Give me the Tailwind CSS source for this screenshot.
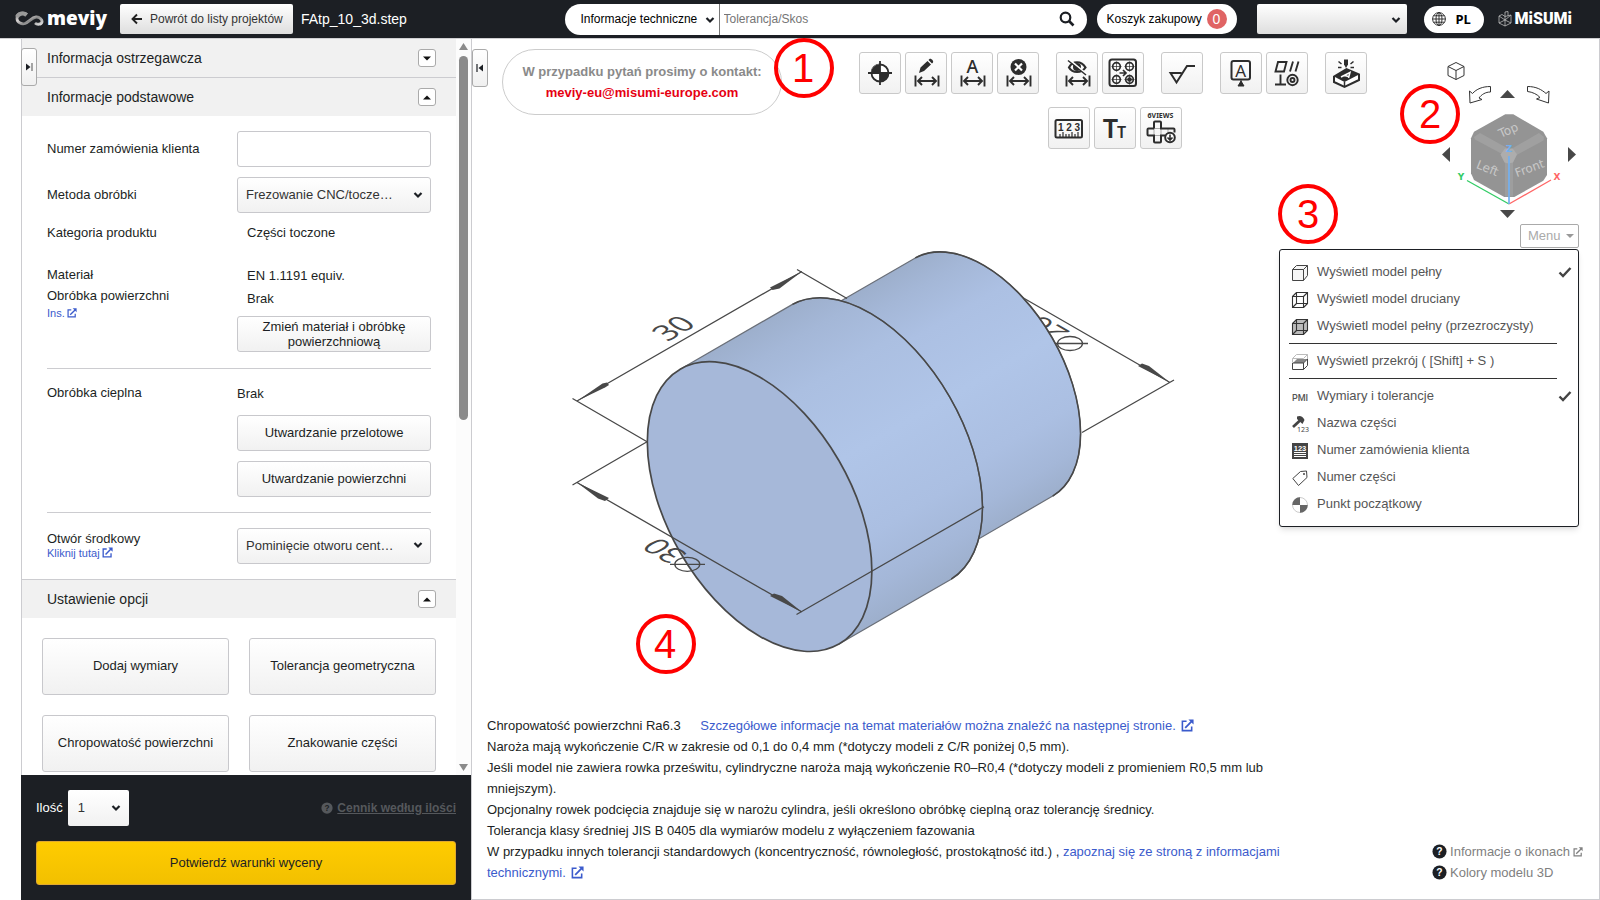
<!DOCTYPE html>
<html lang="pl">
<head>
    <meta charset="UTF-8">
    <meta name="viewport" content="width=device-width, initial-scale=1.0">
    <title>meviy - FAtp_10_3d.step</title>
    <script src="https://cdn.jsdelivr.net/npm/@tailwindcss/browser@4"></script>
</head>
<body class="flex flex-col h-screen overflow-hidden bg-white font-['Liberation_Sans',Arial,sans-serif] text-[13px] leading-5 text-[#1c1f24]">

    <!-- Shared icons -->
    <svg class="hidden" aria-hidden="true">
        <symbol id="chevron" viewBox="0 0 10 8">
            <path d="M1.500 2l3.500 3.500L8.500 2" fill="none" stroke="#1c1f24" stroke-width="2.200"/>
        </symbol>
        <symbol id="external" viewBox="0 0 14 14">
            <path d="M6 2.500H1.500v10h10V8" fill="none" stroke="currentColor" stroke-width="1.700"/>
            <path d="M4.500 9.500L12 2" stroke="currentColor" stroke-width="1.900"/>
            <path d="M8 .5h5.500V6z" fill="currentColor"/>
        </symbol>
        <symbol id="check" viewBox="0 0 14 12">
            <path d="M1.500 6.500L5 10l7.500-8" fill="none" stroke="#444" stroke-width="2.400"/>
        </symbol>
        <symbol id="question" viewBox="0 0 16 16">
            <circle cx="8" cy="8" r="7.500" fill="currentColor"/>
            <text x="8" y="12" text-anchor="middle" font-size="11" font-weight="bold" font-family="Liberation Sans">?</text>
        </symbol>
        <symbol id="dim" viewBox="0 0 40 40">
            <path d="M9.500 22.500v11M32.500 22.500v11M12 28h18M16 24l-4 4 4 4M26 24l4 4-4 4" fill="none" stroke="#2d2d2d" stroke-width="1.900"/>
        </symbol>
    </svg>

    <!-- Top bar -->
    <header class="flex items-center h-[38px] shrink-0 bg-[#1c1f24] pl-[15px] pr-7">
        <a href="#" class="flex items-center w-[105px] text-white" aria-label="meviy">
            <svg class="w-[29px] h-4" viewBox="0 0 29 16">
                <defs>
                    <linearGradient id="silver" x1="0" y1="0" x2="1" y2="1">
                        <stop offset="0" stop-color="#777"/>
                        <stop offset=".35" stop-color="#d8d4d4"/>
                        <stop offset=".6" stop-color="#8b8b8b"/>
                        <stop offset="1" stop-color="#ddd"/>
                    </linearGradient>
                </defs>
                <path d="M12 3.500C9 .8 2.500 1.500 2 7c-.3 4.500 4.500 6.500 8 5.500 4-1.200 6.500-6 11-6.500 4-.3 6.500 3 6 5-.8 2.800-5 2.800-7 1" fill="none" stroke="url(#silver)" stroke-width="2.800"/>
                <path d="M2 6c1.500-3.500 6-4.500 9.500-2" fill="none" stroke="#999" stroke-width="4"/>
            </svg>
            <span class="ml-[3px] mb-[2px] font-['Open_Sans'] text-[19px] font-extrabold">meviy</span>
        </a>
        <button class="flex items-center w-[173px] h-[30px] pl-[11px] rounded-[2px] bg-linear-to-b from-white to-[#dedede] text-xs text-[#333] whitespace-nowrap">
            <svg class="w-[11px] h-3 mr-2" viewBox="0 0 11 12"><path d="M11 6H2M6 1.500L1.500 6 6 10.500" fill="none" stroke="#222" stroke-width="1.900"/></svg>
            Powrót do listy projektów
        </button>
        <span class="ml-2 text-sm text-white">FAtp_10_3d.step</span>

        <form class="flex items-center w-[522px] h-[31px] ml-auto rounded-full bg-white overflow-hidden text-xs">
            <div class="relative h-full w-[155px] border-r border-[#777]">
                <select aria-label="Zakres" class="appearance-none w-full h-full pl-4 text-black">
                    <option>Informacje techniczne</option>
                </select>
                <svg class="absolute right-1 top-3 w-[10px] h-2 pointer-events-none"><use href="#chevron"/></svg>
            </div>
            <input type="search" aria-label="Szukaj" placeholder="Tolerancja/Skos" class="flex-1 h-full pl-1 placeholder:text-[#757575]">
            <button type="button" aria-label="Szukaj" class="w-7">
                <svg class="w-4 h-4" viewBox="0 0 16 16"><circle cx="6.500" cy="6.500" r="4.800" fill="none" stroke="#1c1f24" stroke-width="2.200"/><path d="M10 10l4.500 4.500" stroke="#1c1f24" stroke-width="2.600"/></svg>
            </button>
        </form>
        <a href="#" class="flex items-center justify-between w-[140px] h-[30px] ml-[10px] px-[10px] rounded-full bg-white text-xs text-black whitespace-nowrap">
            Koszyk zakupowy
            <span class="w-5 h-5 rounded-full bg-[#e06464] text-white text-center text-sm leading-5">0</span>
        </a>
        <div class="relative w-[150px] h-[30px] ml-5">
            <select aria-label="Konto" class="appearance-none w-full h-full rounded-[2px] bg-linear-to-b from-white to-[#dedede]">
                <option></option>
            </select>
            <svg class="absolute right-[6px] top-3 w-[10px] h-2 pointer-events-none"><use href="#chevron"/></svg>
        </div>
        <button class="flex items-center w-[60px] h-[27px] ml-[17px] pl-2 rounded-full bg-white text-black font-bold">
            <svg class="w-[14px] h-[14px] mr-[10px]" viewBox="0 0 14 14" fill="none" stroke="#222" stroke-width=".9">
                <circle cx="7" cy="7" r="6.400"/><ellipse cx="7" cy="7" rx="3" ry="6.400"/><path d="M7 .5v13M.5 7h13M1.500 3.800h11M1.500 10.200h11"/>
            </svg>
            <span class="font-['Noto_Sans']">PL</span>
        </button>
        <a href="#" class="flex items-center ml-[14px] text-white" aria-label="MiSUMi">
            <svg class="w-[14px] h-4 mr-[3px]" viewBox="0 0 14 16" fill="none" stroke="#bbb" stroke-width=".8">
                <path d="M1 5l3-1.500 3 2v9.500l-6-3zM7 5.500L13 4v8l-6 3M7 5.500V1l3-.5v4.300M1 5l6 4 6-5M1 12l6-3M7 9l6 3"/>
            </svg>
            <span class="font-['Roboto'] text-base font-black">MiSUMi</span>
        </a>
    </header>

    <div class="flex flex-1 min-h-0 pl-[21px] border-t border-[#cfcfd2]">

        <!-- Left settings panel -->
        <aside class="relative flex flex-col w-[450px] shrink-0">
            <button aria-label="Zwiń panel" class="absolute left-0 top-[9px] z-10 flex items-center justify-center w-4 h-[38px] border border-[#aaa] rounded-[3px] bg-linear-to-b from-white to-[#f0f0f0]">
                <svg class="w-2 h-[10px]" viewBox="0 0 8 10"><path d="M1 1.500v7L5.500 5z" fill="#1c1f24"/><path d="M7 1v8" stroke="#777" stroke-width="1.300"/></svg>
            </button>

            <div class="flex flex-1 min-h-0 border-l border-[#ccccd0]">
                <div class="flex-1 overflow-hidden">
                    <div class="flex items-center justify-between h-[38px] pl-[25px] pr-5 bg-[#f1f1f1] text-sm">
                        <h2>Informacja ostrzegawcza</h2>
                        <button aria-label="Rozwiń" class="flex items-center justify-center w-[18px] h-[18px] border border-[#aaa] rounded-[3px] bg-white"><svg class="w-2 h-[5px]" viewBox="0 0 8 5"><path d="M0 .5h8L4 4.500z" fill="#111"/></svg></button>
                    </div>
                    <div class="flex items-center justify-between h-[39px] pl-[25px] pr-5 border-t border-[#ccccd0] bg-[#f1f1f1] text-sm">
                        <h2>Informacje podstawowe</h2>
                        <button aria-label="Zwiń" class="flex items-center justify-center w-[18px] h-[18px] border border-[#aaa] rounded-[3px] bg-white"><svg class="w-2 h-[5px]" viewBox="0 0 8 5"><path d="M0 4.500h8L4 .5z" fill="#111"/></svg></button>
                    </div>

                    <div class="px-[25px] py-[15px]">
                        <div class="flex items-center justify-between">
                            <label for="order">Numer zamówienia klienta</label>
                            <input id="order" type="text" class="w-[194px] h-9 px-2 border border-[#c8c8cc] rounded-[3px]">
                        </div>
                        <div class="flex items-center justify-between mt-[10px]">
                            <label for="method">Metoda obróbki</label>
                            <div class="relative w-[194px]">
                                <select id="method" class="appearance-none w-full h-9 pl-2 border border-[#c8c8cc] rounded-[3px] bg-linear-to-b from-white to-[#f1f1f1] text-[#333]">
                                    <option>Frezowanie CNC/tocze…</option>
                                </select>
                                <svg class="absolute right-2 top-[14px] w-[10px] h-2 pointer-events-none"><use href="#chevron"/></svg>
                            </div>
                        </div>
                        <div class="flex justify-between mt-[10px]">
                            <span>Kategoria produktu</span>
                            <span class="w-[184px]">Części toczone</span>
                        </div>
                        <div class="flex justify-between mt-[21px] pb-[15px] border-b border-[#ccccd0]">
                            <div class="leading-[21px]">
                                <p>Materiał</p>
                                <p>Obróbka powierzchni</p>
                                <a href="#" class="flex items-center gap-[2px] text-[11px] leading-[14px] text-[#3b5bcc]">Ins. <svg class="w-[10px] h-[10px]"><use href="#external"/></svg></a>
                            </div>
                            <div class="w-[194px] leading-[23px]">
                                <p class="pl-[10px]">EN 1.1191 equiv.</p>
                                <p class="pl-[10px]">Brak</p>
                                <button class="w-full h-9 mt-[6px] px-5 border border-[#c8c8cc] rounded-[3px] bg-linear-to-b from-white to-[#f1f1f1] leading-[15px]">Zmień materiał i obróbkę powierzchniową</button>
                            </div>
                        </div>
                        <div class="flex justify-between mt-[14px] pb-[15px] border-b border-[#ccccd0]">
                            <p>Obróbka cieplna</p>
                            <div class="w-[194px]">
                                <p class="leading-[22px]">Brak</p>
                                <button class="w-full h-9 mt-[10px] border border-[#c8c8cc] rounded-[3px] bg-linear-to-b from-white to-[#f1f1f1]">Utwardzanie przelotowe</button>
                                <button class="w-full h-9 mt-[10px] border border-[#c8c8cc] rounded-[3px] bg-linear-to-b from-white to-[#f1f1f1]">Utwardzanie powierzchni</button>
                            </div>
                        </div>
                        <div class="flex items-center justify-between mt-[15px]">
                            <div class="pb-[2px] leading-[15px]">
                                <label for="hole">Otwór środkowy</label>
                                <a href="#" class="flex items-center gap-[2px] text-[11px] leading-[14px] text-[#3b5bcc]">Kliknij tutaj <svg class="w-[11px] h-[11px]"><use href="#external"/></svg></a>
                            </div>
                            <div class="relative w-[194px]">
                                <select id="hole" class="appearance-none w-full h-9 pl-2 border border-[#c8c8cc] rounded-[3px] bg-linear-to-b from-white to-[#f1f1f1] text-[#333]">
                                    <option>Pominięcie otworu cent…</option>
                                </select>
                                <svg class="absolute right-2 top-[13px] w-[10px] h-2 pointer-events-none"><use href="#chevron"/></svg>
                            </div>
                        </div>
                    </div>

                    <div class="flex items-center justify-between h-[39px] pl-[25px] pr-5 border-t border-[#ccccd0] bg-[#f1f1f1] text-sm">
                        <h2>Ustawienie opcji</h2>
                        <button aria-label="Zwiń" class="flex items-center justify-center w-[18px] h-[18px] border border-[#aaa] rounded-[3px] bg-white"><svg class="w-2 h-[5px]" viewBox="0 0 8 5"><path d="M0 4.500h8L4 .5z" fill="#111"/></svg></button>
                    </div>
                    <div class="grid grid-cols-2 gap-5 p-5">
                        <button class="h-[57px] pb-[2px] border border-[#c8c8cc] rounded-[3px] bg-linear-to-b from-white to-[#f1f1f1]">Dodaj wymiary</button>
                        <button class="h-[57px] pb-[2px] border border-[#c8c8cc] rounded-[3px] bg-linear-to-b from-white to-[#f1f1f1]">Tolerancja geometryczna</button>
                        <button class="h-[57px] pb-[2px] border border-[#c8c8cc] rounded-[3px] bg-linear-to-b from-white to-[#f1f1f1]">Chropowatość powierzchni</button>
                        <button class="h-[57px] pb-[2px] border border-[#c8c8cc] rounded-[3px] bg-linear-to-b from-white to-[#f1f1f1]">Znakowanie części</button>
                    </div>
                </div>

                <!-- Scrollbar -->
                <div class="flex flex-col items-center w-[15px] py-1 bg-[#fcfcfc]">
                    <svg class="w-[9px] h-[7px]" viewBox="0 0 9 7"><path d="M4.500 0L9 7H0z" fill="#8b8b8b"/></svg>
                    <div class="w-[9px] h-1/2 mt-[6px] rounded-full bg-[#8b8b8b]"></div>
                    <svg class="w-[9px] h-[7px] mt-auto" viewBox="0 0 9 7"><path d="M4.500 7L9 0H0z" fill="#8b8b8b"/></svg>
                </div>
            </div>

            <div class="shrink-0 h-[125px] px-[15px] pt-[15px] bg-[#1c1f24]">
                <div class="flex items-center">
                    <label for="qty" class="text-white mr-[5px]">Ilość</label>
                    <div class="relative w-[61px]">
                        <select id="qty" class="appearance-none w-full h-9 pl-[10px] rounded-[2px] bg-linear-to-b from-white to-[#f1f1f1] text-[#333]">
                            <option>1</option>
                        </select>
                        <svg class="absolute right-2 top-[14px] w-[10px] h-2 pointer-events-none"><use href="#chevron"/></svg>
                    </div>
                    <a href="#" class="flex items-center gap-1 ml-auto text-xs text-[#55585c] font-bold">
                        <svg class="w-3 h-3 fill-[#1c1f24]"><use href="#question"/></svg>
                        <span class="underline">Cennik według ilości</span>
                    </a>
                </div>
                <button class="w-full h-11 mt-[15px] border border-[#e0a830] rounded-[3px] bg-linear-to-b from-[#ffcc00] to-[#f2c000]">Potwierdź warunki wyceny</button>
            </div>
        </aside>

        <!-- 3D viewer -->
        <main class="relative flex flex-col justify-between flex-1 border-x border-b border-[#ccccd0]">
            <svg class="absolute inset-0 w-full h-full" viewBox="472 39 1127 860" stroke-linejoin="round">
                <defs>
                    <linearGradient id="big" gradientUnits="userSpaceOnUse" x1="680" y1="369" x2="839" y2="644">
                        <stop offset="0" stop-color="#9dafcc"/>
                        <stop offset=".1" stop-color="#a4b7d7"/>
                        <stop offset=".25" stop-color="#abbfe1"/>
                        <stop offset=".5" stop-color="#b0c5e8"/>
                        <stop offset=".75" stop-color="#abbfe2"/>
                        <stop offset=".9" stop-color="#a4b7d8"/>
                        <stop offset="1" stop-color="#9dafcc"/>
                    </linearGradient>
                    <linearGradient id="small" gradientUnits="userSpaceOnUse" x1="803" y1="323" x2="941" y2="561">
                        <stop offset="0" stop-color="#9dafcc"/>
                        <stop offset=".1" stop-color="#a4b7d7"/>
                        <stop offset=".25" stop-color="#acc0e3"/>
                        <stop offset=".5" stop-color="#b0c5e8"/>
                        <stop offset=".75" stop-color="#abbfe2"/>
                        <stop offset=".9" stop-color="#a4b7d8"/>
                        <stop offset="1" stop-color="#9dafcc"/>
                    </linearGradient>
                </defs>
                <!-- rear diameter dimension, partly behind the part -->
                <g stroke="#484848" stroke-width="1.300" fill="none">
                    <path d="M1020 296L1170 382.500M1082 432.500L1174 380"/>
                    <ellipse cx="1070" cy="343.500" rx="12.500" ry="7"/>
                    <path d="M1052 343.500h36"/>
                    <path d="M1170 382.500l-32-16.500 4-2.500 7 2.500z" fill="#484848" stroke="none"/>
                </g>
                <text transform="matrix(-.866 -.5 .866 -.5 1047 329)" y="11" text-anchor="middle" font-family="Open Sans" font-size="30" fill="#484848">26</text>
                <!-- small cylinder -->
                <path d="M803.100 322.700L915.300 257.900A137.500 79.400 60 0 1 1052.700 496.100L940.500 560.900z" fill="url(#small)" stroke="#6a6f78" stroke-width="1.200"/>
                <path d="M915.300 257.900A137.500 79.400 60 0 1 1052.700 496.100" fill="none" stroke="#484848" stroke-width="1.600"/>
                <!-- large cylinder -->
                <path d="M680.200 369.200L792.500 304.400A158.700 91.700 60 0 1 951.200 579.200L839 644z" fill="url(#big)" stroke="#6a6f78" stroke-width="1.300"/>
                <path d="M792.500 304.400A158.700 91.700 60 0 1 951.200 579.200" fill="none" stroke="#484848" stroke-width="1.500"/>
                <ellipse cx="759.600" cy="506.600" rx="158.700" ry="91.700" transform="rotate(60 759.600 506.600)" fill="#a6b8d9" stroke="#484848" stroke-width="1.700"/>
                <!-- front dimensions -->
                <g stroke="#484848" stroke-width="1.300" fill="none">
                    <path d="M577 401L802 271.500M572.500 398.500L647.500 442M797 269.500L847 298.500"/>
                    <path d="M577 482.500L802 612M572.500 485L647.500 441.500M796.500 614.500L984 506.700"/>
                    <g fill="#484848" stroke="none">
                        <path d="M577 401l25.500-17.500 4.500-1 2 2.500-4 2.500z"/>
                        <path d="M802 271.500l-32 16 2.500 2.500 7-1.500z"/>
                        <path d="M577 482.500l32 15.500-4 3-7-2.500z"/>
                        <path d="M802 612l-32-16 4-2.500 8 2.500z"/>
                    </g>
                    <ellipse cx="687.300" cy="564.300" rx="12.500" ry="7"/>
                    <path d="M670 564.300h35"/>
                </g>
                <g font-family="Open Sans" font-size="30" fill="#484848" text-anchor="middle">
                    <text transform="matrix(.866 -.5 .866 .5 673 328)" y="11">30</text>
                    <text transform="matrix(-.866 -.5 .866 -.5 664 551)" y="11">30</text>
                </g>
                <!-- numbered callouts -->
                <g fill="none" stroke="#f00" stroke-width="4">
                    <circle cx="1430" cy="114" r="28"/>
                    <circle cx="1308" cy="214" r="28"/>
                    <circle cx="666" cy="644" r="28"/>
                </g>
                <g fill="#f00" font-size="40" text-anchor="middle">
                    <text x="1430" y="128">2</text>
                    <text x="1308" y="228">3</text>
                    <text x="665" y="658">4</text>
                </g>
            </svg>

            <div class="relative flex items-start pt-[10px]">
                <button aria-label="Pokaż panel" class="flex items-center justify-center w-4 h-[38px] border border-[#aaa] rounded-[3px] bg-linear-to-b from-white to-[#f0f0f0]">
                    <svg class="w-2 h-[10px]" viewBox="0 0 8 10"><path d="M7 1.500v7L2.500 5z" fill="#1c1f24"/><path d="M1 1v8" stroke="#1c1f24" stroke-width="1.200"/></svg>
                </button>
                <div class="relative w-[280px] h-[66px] ml-[14px] pt-[11px] border border-[#ccc] rounded-[33px] text-center font-bold leading-[21px]">
                    <p class="text-[#8a8a8a]">W przypadku pytań prosimy o kontakt:</p>
                    <a href="#" class="text-[#e60012]">meviy-eu@misumi-europe.com</a>
                    <svg class="absolute -right-[53px] -top-3 w-[60px] h-[60px]" viewBox="0 0 60 60">
                        <circle cx="30" cy="30" r="28" fill="none" stroke="#f00" stroke-width="4"/>
                        <text x="29" y="44" text-anchor="middle" font-size="40" font-weight="normal" fill="#f00">1</text>
                    </svg>
                </div>

                <!-- Toolbar -->
                <div class="flex flex-col items-center gap-[13px] w-[508px] ml-[77px] mt-[3px] [&_button]:w-[42px] [&_button]:h-[42px] [&_button]:border [&_button]:border-[#c9c9c9] [&_button]:rounded-[3px] [&_button]:bg-linear-to-b [&_button]:from-white [&_button]:to-[#f1f1f1] [&_svg]:w-10 [&_svg]:h-10">
                    <div class="flex gap-[17px]">
                        <div class="flex gap-1">
                            <button aria-label="Punkt początkowy"><svg viewBox="0 0 40 40"><circle cx="20" cy="20" r="8.500" fill="#fff" stroke="#2d2d2d" stroke-width="1.800"/><path d="M20 20v-9a9 9 0 0 1 0 0 9 9 0 0 0-9 9z" fill="#fff"/><path d="M20 20v-9a9 9 0 0 0-9 9zM20 20v9a9 9 0 0 0 9-9z" fill="#2d2d2d"/><path d="M20 8v24M8 20h24" stroke="#2d2d2d" stroke-width="1.800"/></svg></button>
                            <button aria-label="Edytuj wymiar"><svg viewBox="0 0 40 40"><use href="#dim"/><path d="M13 20l1.500-5.500 7-6.500 3.500 3.500-7 6.500zM22.500 7l1-1c1.500-1 4.500 2 3.500 3.500l-1 1z" fill="#2d2d2d"/></svg></button>
                            <button aria-label="Tekst wymiaru"><svg viewBox="0 0 40 40"><use href="#dim"/><text x="20.500" y="19.500" text-anchor="middle" font-size="18" font-family="Noto Sans" font-weight="500" fill="#2d2d2d">A</text></svg></button>
                            <button aria-label="Usuń wymiar"><svg viewBox="0 0 40 40"><use href="#dim"/><circle cx="20.500" cy="14" r="8" fill="#2d2d2d"/><path d="M17 10.500l7 7M24 10.500l-7 7" stroke="#fff" stroke-width="2.200"/></svg></button>
                        </div>
                        <div class="flex gap-1">
                            <button aria-label="Ukryj wymiary"><svg viewBox="0 0 40 40"><use href="#dim"/><path d="M12 14.500C15.500 7.500 24.500 7.500 28.500 14.500 24.500 20.500 15.500 20.500 12 14.500z" fill="none" stroke="#2d2d2d" stroke-width="2.200"/><circle cx="20" cy="14" r="4" fill="#2d2d2d"/><path d="M12.500 7l17 14" stroke="#fff" stroke-width="1.800"/><path d="M11 7.500l18 14.500" stroke="#2d2d2d" stroke-width="1.500"/></svg></button>
                            <button aria-label="Kopiuj otwory"><svg viewBox="0 0 40 40" fill="none" stroke="#2d2d2d" stroke-width="1.700"><rect x="6.500" y="6.500" width="26.500" height="26.500" rx="2.500" stroke-width="2"/><circle cx="13.500" cy="13.500" r="3.800"/><circle cx="26.500" cy="13.500" r="3.800"/><circle cx="13.500" cy="26.500" r="3.800"/><circle cx="26.500" cy="26.500" r="3.800"/><circle cx="26.500" cy="26.500" r="1.500" fill="#2d2d2d"/><path d="M13.500 8.500v10M8.500 13.500h10M26.500 8.500v10M21.500 13.500h10M13.500 21.500v10M8.500 26.500h10M26.500 21.500v10M21.500 26.500h10" stroke-width=".7"/><path d="M16.500 20h6M20 17l3 3-3 3"/></svg></button>
                        </div>
                        <button aria-label="Chropowatość"><svg viewBox="0 0 40 40"><path d="M19.500 20H8.500l6 9.500L25 13h8" fill="none" stroke="#2d2d2d" stroke-width="2"/></svg></button>
                        <div class="flex gap-1">
                            <button aria-label="Baza"><svg viewBox="0 0 40 40"><rect x="10.500" y="8" width="18.500" height="18.500" rx="2" fill="none" stroke="#2d2d2d" stroke-width="2"/><text x="19.700" y="23.500" text-anchor="middle" font-size="17" font-family="Noto Sans" fill="#2d2d2d">A</text><path d="M20 26.500v4M20 28l3 5h-6z" fill="#2d2d2d" stroke="#2d2d2d"/></svg></button>
                            <button aria-label="Tolerancja geometryczna"><svg viewBox="0 0 40 40" fill="none" stroke="#2d2d2d" stroke-width="1.900"><path d="M11 9h8.500l-2.500 9.500H8.500zM26 8.500l-3 10M31.500 8.500l-3 10M13.500 21.500v10M8 31.500h11"/><circle cx="25.500" cy="27" r="5.200"/><circle cx="25.500" cy="27" r="2"/></svg></button>
                        </div>
                        <button aria-label="Znakowanie"><svg viewBox="0 0 40 40"><path d="M8 23.500L20.500 16 33 21.500v5.500L18.500 34 8 29z" fill="#fff" stroke="#2d2d2d" stroke-width="2"/><path d="M8 23.500L20.500 16 33 21.500 18.500 29z" fill="#2d2d2d"/><path d="M18.500 29v5" stroke="#2d2d2d" stroke-width="1.500"/><path d="M15 24l9-4.500-1.500 5.500M18.500 22.500l4 1" fill="none" stroke="#fff" stroke-width="1.500"/><path d="M18 6.500h4v5l-2 3.500-2-3.500z" fill="#2d2d2d"/><path d="M12.500 8.500l3 2.500M12 14.500h3.500M27.500 8.500l-3 2.500M28 14.500h-3.500" stroke="#2d2d2d" stroke-width="1.500"/></svg></button>
                    </div>
                    <div class="flex gap-1 pl-1">
                        <button aria-label="Pomiar"><svg viewBox="0 0 40 40"><rect x="6.500" y="12" width="26.500" height="17.500" rx="1.500" fill="none" stroke="#2d2d2d" stroke-width="2"/><text x="20" y="22.500" text-anchor="middle" font-size="10" font-weight="bold" fill="#2d2d2d">1 2 3</text><path d="M11 29v-3M14 29v-5M17 29v-3M20 29v-3M23 29v-5M26 29v-3M29 29v-5" stroke="#2d2d2d" stroke-width="1.200"/></svg></button>
                        <button aria-label="Rozmiar tekstu"><svg viewBox="0 0 40 40" font-family="Noto Sans" font-weight="600" fill="#2d2d2d" text-anchor="middle"><text x="15.500" y="30" font-size="27">T</text><text x="26.500" y="30" font-size="16">T</text></svg></button>
                        <button aria-label="6 widoków"><svg viewBox="0 0 40 40"><text x="19.500" y="9.500" text-anchor="middle" font-size="7" font-weight="bold" font-family="Noto Sans" fill="#2d2d2d">6VIEWS</text><path d="M13 20.500h7M13 27.500h7M13 20.500v7M20 20.500v7M27 20.500v4" stroke="#aaa"/><path d="M13 20.500v-6q0-1 1-1h5q1 0 1 1v6h12.500q1 0 1 1v3M13 20.500H7.500q-1 0-1 1v5q0 1 1 1H13v6q0 1 1 1h5q1 0 1-1v-6h4" fill="none" stroke="#2d2d2d" stroke-width="2"/><circle cx="29" cy="29.500" r="4.800" fill="#fff" stroke="#2d2d2d" stroke-width="2"/><path d="M29 26.500v5M26.500 29.500l2.500 2.500 2.500-2.500" fill="none" stroke="#2d2d2d" stroke-width="1.600"/></svg></button>
                    </div>
                </div>

                <!-- View cube and display menu -->
                <div class="absolute right-5 top-5 flex flex-col items-end">
                    <svg class="w-[140px] h-[163px]" viewBox="1439 59 140 163" role="img" aria-label="Kostka widoku">
                        <path d="M1456 62.500l8 4v9l-8 4-8-4v-9zM1448 66.500l8 4 8-4M1456 70.500v9" fill="none" stroke="#333"/>
                        <g fill="#fff" stroke="#333">
                            <path d="M1490.500 86.500v5.500c-5 0-9 2.500-11.500 6l3 1.500-12 3.500-.5-12 3 2.500c4-4.500 10-7 18-7z"/>
                            <path d="M1527.500 86.500v5c5 .5 10 3 12.500 6l-3.500 1.500 12 4 .5-12-3 2.500c-4.500-4-10-7-18.500-7z"/>
                        </g>
                        <g fill="#484848">
                            <path d="M1507.500 90l7.500 8h-15z"/>
                            <path d="M1507.500 218l7.500-8h-15z"/>
                            <path d="M1442 154.500l8-7.500v15z"/>
                            <path d="M1576 154.500l-8-7.500v15z"/>
                        </g>
                        <path d="M1505.300 114.300h8l30 17.400 3.700 6.600v36.700l-3.700 5.700-29 16.300h-10l-30.300-17-3-6.700v-35l3-6.600z" fill="#949494"/>
                        <path d="M1474 137l6-4 27 15-3 7-29-15.500zM1544 137l-5-4-26 15 3.500 7 27-14.500z" fill="#a0a0a0"/>
                        <path d="M1505 161h8v35.500h-8z" fill="#9e9e9e"/>
                        <path d="M1505 148.500h8l4 6-4 8-4.500 1-4-1-4-8z" fill="#adadad"/>
                        <g font-family="DejaVu Sans" font-size="12" fill="#c8c8c8" text-anchor="middle">
                            <text transform="translate(1510 134) rotate(-24)">Top</text>
                            <text transform="translate(1486 172) rotate(22)">Left</text>
                            <text transform="translate(1531 172) rotate(-20)">Front</text>
                        </g>
                        <path d="M1509 204l-42-23.500" stroke="#3c6" stroke-width="1.300"/>
                        <path d="M1509 204l42-24" stroke="#f66" stroke-width="1.300"/>
                        <path d="M1509 204v-48" stroke="#72b0f0" stroke-width="1.700"/>
                        <g font-family="DejaVu Sans" font-size="9" font-weight="bold" text-anchor="middle">
                            <text x="1461" y="180" fill="#3c6">Y</text>
                            <text x="1557" y="180" fill="#f66">X</text>
                            <text x="1509" y="152" fill="#72b0f0">Z</text>
                        </g>
                    </svg>
                    <button class="flex items-center justify-between w-[59px] h-6 mt-[2px] pl-[7px] pr-1 border border-[#aaa] rounded-[2px] bg-white text-[#aaa]">
                        Menu <svg class="w-2 h-1" viewBox="0 0 8 4"><path d="M0 0h8L4 4z" fill="#999"/></svg>
                    </button>
                    <ul class="w-[300px] h-[278px] mt-px pt-2 px-[9px] border border-[#1c1f24] rounded-[3px] bg-white shadow-md leading-[27px] text-[#555] [&_a]:flex [&_a]:items-center [&_a]:h-[27px] [&_svg:first-child]:w-4 [&_svg:first-child]:h-4 [&_svg:first-child]:ml-[3px] [&_svg:first-child]:mr-[9px] [&_svg:first-child]:mt-[2px] [&_svg:first-child]:overflow-visible">
                        <li><a href="#"><svg viewBox="0 0 16 16" fill="#f6f6f6" stroke="#444"><path d="M.5 4.500l4-4h11v10l-4 5H.5zM.5 4.500h11v11M11.500 4.500l4-4"/></svg>Wyświetl model pełny<svg class="w-[14px] h-3 ml-auto -mr-[3px]"><use href="#check"/></svg></a></li>
                        <li><a href="#"><svg viewBox="0 0 16 16" fill="none" stroke="#333" stroke-width="1.100"><path d="M.5 4.500h11v11H.5zM4.500.5h11v11h-11zM.5 4.500l4-4M11.500 4.500l4-4M11.500 15.500l4-4M.5 15.500l4-4"/></svg>Wyświetl model druciany</a></li>
                        <li class="pb-1 border-b border-[#333] mr-3"><a href="#"><svg viewBox="0 0 16 16" fill="#bbb" stroke="#333" stroke-width="1.100"><path d="M.5 4.500l4-4h11v11l-4 4H.5z"/><path d="M.5 4.500h11v11M4.500.5v11h11M11.500 4.500l4-4M.5 15.500l4-4" fill="none"/></svg>Wyświetl model pełny (przezroczysty)</a></li>
                        <li class="pt-[3px] pb-1 border-b border-[#333] mr-3"><a href="#"><svg viewBox="0 0 16 16"><path d="M.5 8V4.500l4-4h11V5M.5 4.500h11l4-4" fill="none" stroke="#bbb"/><path d="M1 9l4-4h10.500l-4 4z" fill="#888"/><path d="M.5 9h11v6.500H.5zM11.500 9l4-4v6.500l-4 4" fill="#fff" stroke="#444"/></svg>Wyświetl przekrój ( [Shift] + S )</a></li>
                        <li class="pt-[3px]"><a href="#"><svg viewBox="0 0 16 16"><text x="0" y="12" font-size="9" font-weight="500" font-family="Roboto" fill="#555">PMI</text></svg>Wymiary i tolerancje<svg class="w-[14px] h-3 ml-auto -mr-[3px]"><use href="#check"/></svg></a></li>
                        <li><a href="#"><svg viewBox="0 0 16 16"><path d="M1 11L8 4.500" stroke="#444" stroke-width="2.800"/><path d="M5 .5c3-1.500 6 0 7.500 3.500L10.500 8 5 3z" fill="#444"/><text x="5" y="15.500" font-size="7" font-family="Noto Sans" fill="#444">123</text></svg>Nazwa części</a></li>
                        <li><a href="#"><svg viewBox="0 0 16 16"><path d="M0 0h16v16H0z" fill="#444"/><text x="8" y="7.500" text-anchor="middle" font-size="7.500" font-weight="bold" fill="#fff">123</text><path d="M2 9.500h12M2 11.500h12M2 13.500h12" stroke="#fff"/></svg>Numer zamówienia klienta</a></li>
                        <li><a href="#"><svg viewBox="0 0 16 16"><path d="M.8 8.500L8.500 1.500l6-.5 .5 6.500-8.500 8z" fill="#fff" stroke="#444"/><circle cx="12" cy="4" r="1" fill="#444"/></svg>Numer części</a></li>
                        <li><a href="#"><svg viewBox="0 0 16 16"><circle cx="8" cy="8" r="7.500" fill="#fff" stroke="#ccc"/><path d="M8 8V.3A7.700 7.700 0 0 0 .3 8zM8 8v7.700A7.700 7.700 0 0 0 15.700 8z" fill="#666"/></svg>Punkt początkowy</a></li>
                    </ul>
                </div>
            </div>

            <!-- Notes -->
            <div class="relative flex items-end justify-between pl-[15px] pr-4 pb-4 leading-[21px]">
                <div class="w-[800px] [&_a]:text-[#3b5bcc]">
                    <p>Chropowatość powierzchni Ra6.3 <a href="#" class="ml-4">Szczegółowe informacje na temat materiałów można znaleźć na następnej stronie. <svg class="inline w-[13px] h-[13px] ml-[2px] mb-[2px]"><use href="#external"/></svg></a></p>
                    <p>Naroża mają wykończenie C/R w zakresie od 0,1 do 0,4 mm (*dotyczy modeli z C/R poniżej 0,5 mm).</p>
                    <p>Jeśli model nie zawiera rowka prześwitu, cylindryczne naroża mają wykończenie R0–R0,4 (*dotyczy modeli z promieniem R0,5 mm lub mniejszym).</p>
                    <p>Opcjonalny rowek podcięcia znajduje się w narożu cylindra, jeśli określono obróbkę cieplną oraz tolerancję średnicy.</p>
                    <p>Tolerancja klasy średniej JIS B 0405 dla wymiarów modelu z wyłączeniem fazowania</p>
                    <p>W przypadku innych tolerancji standardowych (koncentryczność, równoległość, prostokątność itd.) , <a href="#">zapoznaj się ze stroną z informacjami technicznymi. <svg class="inline w-[13px] h-[13px] ml-[2px] mb-[2px]"><use href="#external"/></svg></a></p>
                </div>
                <div class="text-[#808080]">
                    <a href="#" class="flex items-center gap-[3px]"><svg class="w-[15px] h-[15px] text-[#1c1f24] fill-white"><use href="#question"/></svg>Informacje o ikonach <svg class="w-[10px] h-[10px]"><use href="#external"/></svg></a>
                    <a href="#" class="flex items-center gap-[3px]"><svg class="w-[15px] h-[15px] text-[#1c1f24] fill-white"><use href="#question"/></svg>Kolory modelu 3D</a>
                </div>
            </div>
        </main>
    </div>
</body>
</html>
